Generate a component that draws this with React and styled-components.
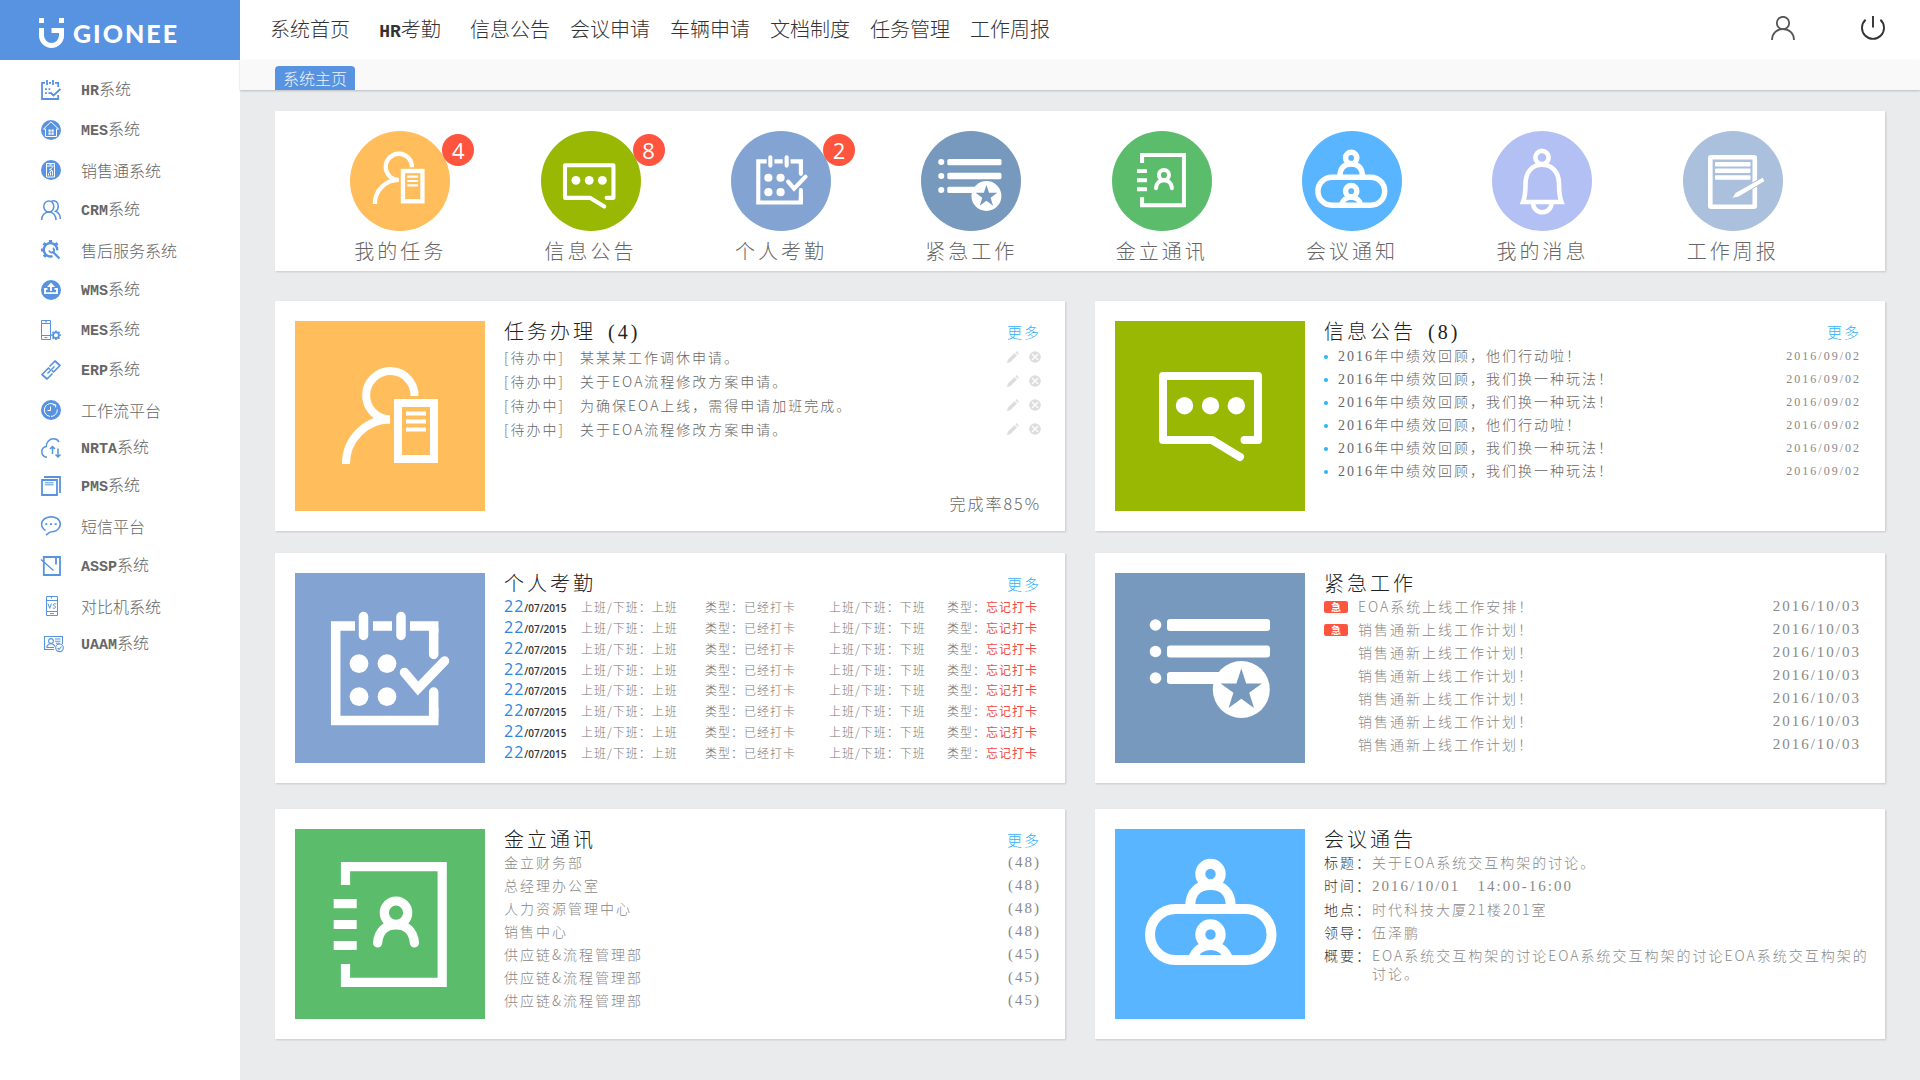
import styled, { createGlobalStyle } from "styled-components";

const GlobalStyle = createGlobalStyle`
    * {
        box-sizing: border-box;
    }

    body {
        margin: 0;
        background: #eaebed;
        font-family: "Noto Sans CJK SC", sans-serif;
        font-weight: 300;
        color: #666;
    }

    h2, ul, dl, dd {
        margin: 0;
        padding: 0;
        font-weight: inherit;
    }

    ul {
        list-style: none;
    }

    a {
        color: inherit;
        text-decoration: none;
    }

    button {
        padding: 0;
        border: 0;
        background: none;
        font: inherit;
        cursor: pointer;
    }

    svg {
        display: block;
    }
`;

const serif = `"Liberation Serif", "Noto Sans CJK SC", serif`;

const Shell = styled.div`
    display: grid;
    grid-template-columns: 240px 1fr;
    min-height: 100vh;
`;

const Sidebar = styled.aside`
    background: #fff;
`;

const Logo = styled.a`
    display: flex;
    align-items: center;
    gap: 8px;
    height: 60px;
    padding: 6px 0 0 39px;
    background: #5793e1;
    color: #fff;
`;

const LogoText = styled.span`
    font-family: Lato, sans-serif;
    font-size: 25px;
    font-weight: 900;
    line-height: 30px;
    letter-spacing: 2px;
`;

const SideList = styled.ul`
    padding-top: 10px;
`;

const SideLink = styled.a`
    display: flex;
    align-items: center;
    gap: 20px;
    height: ${(p) => (p.$compact ? "36px" : "40px")};
    padding-left: 41px;
    font-size: 16px;
    line-height: 20px;
`;

const Latin = styled.b`
    font-family: "Liberation Mono", monospace;
    font-size: ${(p) => (p.$large ? "18px" : "15px")};
    font-weight: 700;
`;

const Main = styled.main`
    display: flex;
    flex-direction: column;
    min-width: 0;
`;

const TopBar = styled.header`
    display: flex;
    justify-content: space-between;
    align-items: center;
    height: 60px;
    padding: 0 35px 0 30px;
    background: #fff;
`;

const Nav = styled.nav`
    display: flex;
    gap: 20px;
`;

const NavLink = styled.a`
    min-width: 80px;
    text-align: center;
    font-size: 20px;
    line-height: 28px;
    white-space: nowrap;
    color: #333;
`;

const Tools = styled.div`
    display: flex;
    gap: 66px;
    padding-bottom: 4px;
    color: #444;
`;

const TabBar = styled.div`
    display: flex;
    align-items: flex-end;
    height: 30px;
    padding: 0 35px;
    background: #f9f9f9;
    box-shadow: 0 1px 2px rgba(0, 0, 0, 0.2);
`;

const Tab = styled.button`
    width: 80px;
    height: 24px;
    border-radius: 4px 4px 0 0;
    background: #5793e1;
    color: #eef3fb;
    font-size: 16px;
    line-height: 24px;
`;

const Content = styled.div`
    padding: 21px 35px 41px;
`;

const Surface = styled.section`
    background: #fff;
    box-shadow: 1px 1px 2px rgba(0, 0, 0, 0.15);
`;

const QuickBar = styled(Surface)`
    display: grid;
    grid-template-columns: repeat(8, 1fr);
    min-height: 160px;
    padding: 20px 57px 4px 30px;
`;

const QuickLink = styled.a`
    display: flex;
    flex-direction: column;
    align-items: center;
    gap: 6px;
    font-size: 20px;
    line-height: 28px;
    letter-spacing: 3px;
    white-space: nowrap;
`;

const Circle = styled.span`
    position: relative;
    width: 100px;
    height: 100px;
    border-radius: 50%;
    background: ${(p) => p.$color};
    color: ${(p) => p.$color};
`;

const Badge = styled.span`
    position: absolute;
    top: 3px;
    right: -24px;
    width: 32px;
    height: 32px;
    border-radius: 50%;
    background: #ff553e;
    color: #fff;
    font-family: "Open Sans", sans-serif;
    font-size: 22px;
    font-weight: 400;
    line-height: 32px;
    letter-spacing: 0;
    text-align: center;
`;

const PanelRow = styled.div`
    display: grid;
    grid-template-columns: 1fr 1fr;
    gap: 30px;
    margin-top: ${(p) => p.$gap};
`;

const Card = styled(Surface)`
    display: flex;
    gap: 19px;
    min-width: 0;
    padding: 20px 14px 20px 20px;
`;

const Tile = styled.div`
    flex: none;
    width: 190px;
    height: 190px;
    background: ${(p) => p.$color};
    color: ${(p) => p.$color};
`;

const CardBody = styled.div`
    display: flex;
    flex-direction: column;
    flex: 1;
    min-width: 0;
`;

const CardHead = styled.div`
    display: flex;
    justify-content: space-between;
    align-items: center;
    height: 22px;
    padding-right: 10px;
`;

const Title = styled.h2`
    display: flex;
    gap: 12px;
    color: #222;
    font-family: ${serif};
    font-size: 20px;
    line-height: 22px;
    letter-spacing: 3px;
`;

const More = styled.a`
    color: #33b1f8;
    font-size: 15px;
    line-height: 22px;
    letter-spacing: 2px;
`;

const List = styled.ul`
    padding: ${(p) => p.$top || "0"} 10px 0 0;
    color: ${(p) => p.$color || "#888"};
    font-family: ${(p) => (p.$serif ? serif : "inherit")};
    font-size: 14px;
    line-height: ${(p) => p.$line || "23px"};
    letter-spacing: 2px;
`;

const Row = styled.li`
    display: flex;
    align-items: center;
    gap: 10px;
`;

const RowText = styled.a`
    flex: 1;
    white-space: pre;
`;

const Dot = styled.span`
    width: 4px;
    height: 4px;
    border-radius: 50%;
    background: #29b6f6;
`;

const Flag = styled.span`
    width: 24px;
    height: 12px;
    border-radius: 2px;
    background: ${(p) => (p.$on ? "#ff553e" : "transparent")};
    color: #fff;
    font-size: 10px;
    font-weight: 700;
    line-height: 12px;
    letter-spacing: 0;
    text-align: center;
`;

const Num = styled.span`
    font-family: ${serif};
    font-size: ${(p) => (p.$small ? "12px" : "15px")};
    letter-spacing: 2px;
    white-space: pre;
    color: #888;
`;

const IconButton = styled.button`
    color: #ddd;
`;

const Rate = styled.p`
    margin: auto 10px 0 0;
    text-align: right;
    font-size: 16px;
    line-height: 16px;
    letter-spacing: 2px;
`;

const Attendance = styled.table`
    width: calc(100% - 10px);
    height: 166px;
    margin-top: 2px;
    border-collapse: collapse;
    table-layout: fixed;
    color: #777;
    font-size: 12px;
    line-height: 16px;
    letter-spacing: 1px;
    white-space: nowrap;

    td {
        padding: 0;
    }
`;

const Col = styled.col`
    width: ${(p) => p.$width};
`;

const DateCell = styled.td`
    color: #333;
    font-family: "Open Sans", sans-serif;
    font-size: 10px;
    font-weight: 600;
    letter-spacing: 0;
`;

const Day = styled.span`
    color: #2b86e0;
    font-size: 16px;
    font-weight: 400;
    letter-spacing: 1px;
`;

const Missed = styled.span`
    color: #f04a4a;
    font-weight: 400;
`;

const Details = styled.dl`
    font-size: 14px;
    line-height: 18px;
    letter-spacing: 2px;
`;

const Detail = styled.div`
    display: flex;
    padding: 2px 0 3px;
    color: #888;

    dt {
        flex: none;
        width: 48px;
        color: #333;
    }
`;

const TaskArt = () => (
    <g fill="none" stroke="#fff" strokeWidth="8">
        <path d="M119.5 75A24.2 24.2 0 1 0 95 98.500" />
        <path d="M95 98.500A44 44 0 0 0 51 143" />
        <rect x="103" y="82" width="36" height="56" />
        <path strokeWidth="4" d="M111 92.500h20M111 100.500h20M111 108.500h20" />
    </g>
);

const ChatArt = () => (
    <g fill="#fff">
        <path
            d="M129.500 119H143V55H48V119H97L125 136"
            fill="none"
            stroke="#fff"
            strokeWidth="8"
            strokeLinecap="round"
            strokeLinejoin="round"
        />
        <circle cx="69.500" cy="84.700" r="8.700" />
        <circle cx="95.500" cy="84.700" r="8.700" />
        <circle cx="121.300" cy="84.700" r="8.700" />
    </g>
);

const CalendarArt = () => (
    <g fill="none" stroke="#fff" strokeWidth="9.500">
        <path d="M60 53H40.700V147.500H138.700V135M78 53H97M115 53H138.700V60" />
        <path strokeLinecap="round" d="M68.500 43.500V62.500M106 43.500V62.500M138.700 56V81.500M138.700 119V144M109.500 99.500L123 115.500L149.500 88" />
        <g fill="#fff" stroke="none">
            <circle cx="64" cy="90.600" r="9.400" />
            <circle cx="92" cy="90.600" r="9.400" />
            <circle cx="64" cy="123.600" r="9.400" />
            <circle cx="92" cy="123.600" r="9.400" />
        </g>
    </g>
);

const UrgentArt = () => (
    <g fill="#fff">
        <circle cx="40.500" cy="52" r="5.800" />
        <circle cx="40.500" cy="78.500" r="5.800" />
        <circle cx="40.500" cy="105" r="5.800" />
        <rect x="52" y="46" width="103" height="12" rx="3" />
        <rect x="52" y="72.500" width="103" height="12" rx="3" />
        <rect x="52" y="99" width="60" height="12" rx="3" />
        <circle cx="126.300" cy="116.500" r="28.500" />
        <path
            fill="currentColor"
            d="M126.300 95.500L131.200 110.500H147L134.200 119.800L139 135L126.300 125.700L113.600 135L118.400 119.800L105.600 110.500H121.400Z"
        />
    </g>
);

const ContactArt = () => (
    <g fill="none" stroke="#fff" strokeWidth="9.200">
        <path d="M50.500 56V37.600H147.200V153.400H50.500V135" />
        <path d="M38.700 74.700H61.700M38.700 95.500H61.700M38.700 116.500H61.700" />
        <circle cx="101" cy="83.700" r="11.700" />
        <path strokeLinecap="round" d="M82.600 114C83.500 102 91 95.800 101 95.800S118.500 102 119.400 114" />
    </g>
);

const MeetingArt = () => (
    <g fill="none" stroke="#fff" strokeWidth="10">
        <rect x="35" y="80" width="121.500" height="51" rx="25.500" />
        <circle cx="95.500" cy="45" r="10.200" />
        <path d="M75.200 77C75.200 63 84 56 95.500 56S115.800 63 115.800 77" />
        <circle cx="95.500" cy="105.500" r="10.200" />
        <path strokeWidth="9" d="M77 131C80 121 87 116.500 95.500 116.500S111 121 114 131" />
    </g>
);

const BellArt = () => (
    <g fill="none" stroke="#fff" strokeWidth="4.600">
        <circle cx="50" cy="26.500" r="6.600" />
        <path d="M31 71C33 66 33.500 60 33.500 53C33.500 41 40 33.800 50 33.800S67 41 67 53C67 60 67.500 66 69.500 71Z" />
        <path d="M41 72A9 9 0 0 0 59.500 72" />
    </g>
);

const ReportArt = () => (
    <g fill="#fff">
        <rect x="27.300" y="26.300" width="44.500" height="49.500" rx="1" fill="none" stroke="#fff" strokeWidth="4.600" />
        <rect x="32" y="31" width="35.500" height="4.500" rx="1" />
        <rect x="32" y="37.600" width="35.500" height="4.500" rx="1" />
        <rect x="32" y="44.200" width="35.500" height="4.500" rx="1" />
        <path
            d="M48.500 67.500L52.500 61.500L79.800 46.200L82 50.300L55.500 66Z"
            stroke="currentColor"
            strokeWidth="1"
        />
    </g>
);

const quickLinks = [
    { label: "我的任务", color: "#ffbe5b", art: TaskArt, box: "5 8 185 185", count: 4 },
    { label: "信息公告", color: "#99b803", art: ChatArt, box: "1 -12 196 196", count: 8 },
    { label: "个人考勤", color: "#83a4d2", art: CalendarArt, box: "-22 -17 230 230", count: 2 },
    { label: "紧急工作", color: "#7799bd", art: UrgentArt, box: "2 -7 190 190" },
    { label: "金立通讯", color: "#5bbd6c", art: ContactArt, box: "-19 -18 231 231" },
    { label: "会议通知", color: "#59b5ff", art: MeetingArt, box: "6 -4 182 182" },
    { label: "我的消息", color: "#b3c0f3", art: BellArt, box: "0 0 100 100" },
    { label: "工作周报", color: "#abc0dc", art: ReportArt, box: "0 0 100 100" },
];

const navLinks = [
    { text: "系统首页" },
    { latin: "HR", text: "考勤" },
    { text: "信息公告" },
    { text: "会议申请" },
    { text: "车辆申请" },
    { text: "文档制度" },
    { text: "任务管理" },
    { text: "工作周报" },
];

const sideLinks = [
    {
        latin: "HR",
        text: "系统",
        icon: (
            <g fill="none" stroke="currentColor" strokeWidth="1.800">
                <path d="M4 2.800H1V19H17.200V15M8 2.800h2M14 2.800h3.200V7" />
                <path d="M6 0v5M12 0v5" />
                <path d="M4 9.200h1.800M7.500 9.200h1.800M4 13.200h1.800M7.500 13.200h1.800M9.500 12.500L12.500 15.500L19.500 9" />
            </g>
        ),
    },
    {
        latin: "MES",
        text: "系统",
        icon: (
            <g fill="none" stroke="#fff" strokeWidth="1">
                <circle cx="10" cy="10" r="10" fill="currentColor" stroke="none" />
                <path d="M2.500 9L10 1.800L17.500 9H15.500V16.500H4.500V9Z" />
                <path fill="#fff" stroke="none" d="M7.500 9.500h2.200v2.200H7.500zM10.500 9.500h2.200v2.200h-2.200zM7.500 12.500h2.200v2.200H7.500zM10.500 12.500h2.200v2.200h-2.200z" />
            </g>
        ),
    },
    {
        text: "销售通系统",
        icon: (
            <g fill="none" stroke="#fff" strokeWidth="1">
                <circle cx="10" cy="10" r="10" fill="currentColor" stroke="none" />
                <path d="M5.500 3.500h8v13.500h-8zM5.500 6h8M8.500 4.700h2" />
                <path d="M11.500 7.500L8.500 9.500L11 10.500L8 12.500M7.500 15.500v-2M9.500 15.500v-3M11.500 15.500v-5" />
            </g>
        ),
    },
    {
        latin: "CRM",
        text: "系统",
        icon: (
            <g fill="none" stroke="currentColor" strokeWidth="1.500">
                <ellipse cx="7.800" cy="6.500" rx="5" ry="5.500" />
                <path d="M.7 20C.7 15.500 3.500 12 7.800 12S15 15.500 15 20M10.500 1.200C14 -.3 17.300 2.300 17.300 6C17.300 8.500 16.300 10.300 14.500 11.300C17.500 12.500 19.300 15 19.300 19" />
            </g>
        ),
    },
    {
        text: "售后服务系统",
        icon: (
            <g fill="none" stroke="currentColor">
                <circle cx="9.500" cy="9.800" r="6.700" strokeWidth="2.400" strokeDasharray="34 9" transform="rotate(72 9.500 9.800)" />
                <path strokeWidth="3.200" d="M9.500 0v3M0 10h3M2.600 3.200L5 5.400M16.500 3.200L14 5.400M3 16.800L5 14.500" />
                <path strokeWidth="2.200" d="M11.500 11.500L18.500 18.500" />
                <path strokeWidth="1.700" d="M8 10.500A3 3 0 0 0 12.500 12A3 3 0 0 0 12 8" />
            </g>
        ),
    },
    {
        latin: "WMS",
        text: "系统",
        icon: (
            <g fill="none" stroke="#fff" strokeWidth="1.800">
                <circle cx="10" cy="10" r="10" fill="currentColor" stroke="none" />
                <path d="M6.500 8.900H4V13.200H16V8.900H13.500M10 11V6" />
                <path fill="#fff" stroke="none" d="M10 2.500L14 7H6z" />
            </g>
        ),
    },
    {
        latin: "MES",
        text: "系统",
        icon: (
            <g fill="none" stroke="currentColor" strokeWidth="1">
                <path d="M.5 .5h9v19h-9zM.5 3.500h9M.5 15.500h9M4 1.800h2M3.500 17.600h3" />
                <circle cx="15" cy="15.200" r="2.900" strokeWidth="1.800" />
                <path strokeWidth="1.800" d="M15 10.400v1.500M15 18.500v1.500M10.200 15.200h1.500M18.300 15.200h1.500M11.600 11.800l1 1M17.400 17.600l1 1M18.400 11.800l-1 1M12.600 17.600l-1 1" />
            </g>
        ),
    },
    {
        latin: "ERP",
        text: "系统",
        icon: (
            <g fill="none" stroke="currentColor" strokeWidth="1.700" strokeLinejoin="round">
                <path d="M8.500 6.500L14 1L19 5.500L12.500 12L11 10.500" />
                <path d="M11.500 13.500L6 19L1 14.500L7.500 8L9 9.500" />
                <path strokeWidth="1.400" d="M6.500 13.500L13.500 6.500" />
            </g>
        ),
    },
    {
        text: "工作流平台",
        icon: (
            <g fill="none" stroke="#fff" strokeWidth="1">
                <circle cx="10" cy="10" r="10" fill="currentColor" stroke="none" />
                <path d="M14 5A6.500 6.500 0 1 0 16.300 9.500M11.500 4.800H14.700V7.500M9.500 6.500V10.500H6.500" />
                <path stroke="currentColor" d="M9.500 15v3M14 14.500l1.500 1.500" />
            </g>
        ),
    },
    {
        latin: "NRTA",
        text: "系统",
        compact: true,
        icon: (
            <g fill="none" stroke="currentColor" strokeWidth="1.500">
                <path d="M6 19.300C2.500 19.300 .8 16.500 .8 13.800C.8 11 2.500 9 5.300 8.500C5.300 4 8.500 .8 12.500 .8C15 .8 17 2 18 3.800" />
                <path d="M11.500 16V9M9 11L11.500 8.500L14 11M17 10.500V19M14.500 16.500L17 19L19.500 16.500" />
            </g>
        ),
    },
    {
        latin: "PMS",
        text: "系统",
        icon: (
            <g fill="none" stroke="currentColor" strokeWidth="1.800">
                <path d="M3 1H19V17" />
                <path d="M1 4H16V19H1Z" />
                <path strokeWidth="1" d="M4 6.800h8.500M4 8.800h8.500" />
            </g>
        ),
    },
    {
        text: "短信平台",
        icon: (
            <g fill="none" stroke="currentColor" strokeWidth="1.600">
                <path d="M4.500 14.500C-1 11 -.3 5 4.500 2.300C9 -.3 16 .8 18.400 4.800C21 10 17 15.500 10.500 15.800C8.500 15.800 7.500 17.500 5 19" />
                <path strokeWidth="1.800" d="M4.300 8.200h2M9 8.200h2M13.700 8.200h2" />
            </g>
        ),
    },
    {
        latin: "ASSP",
        text: "系统",
        icon: (
            <g fill="none" stroke="currentColor" strokeWidth="1.800">
                <path d="M2.800 1H19V19H2.800ZM15 1v7.500" />
                <path strokeWidth="1.300" d="M0 3.500L12.500 14.500" />
            </g>
        ),
    },
    {
        text: "对比机系统",
        icon: (
            <g fill="none" stroke="currentColor" strokeWidth="1">
                <path d="M5.500 .5h11v19h-11zM5.500 4.500h11M5.500 15.500h11M10.500 1v1.500M9 17.600h4" />
                <path d="M7 7.500L8.700 12.300L10.400 7.500M14.900 8C12.500 6.800 11.300 9.200 13.300 9.900C15.800 10.800 14.300 13 11.900 12" />
            </g>
        ),
    },
    {
        latin: "UAAM",
        text: "系统",
        compact: true,
        icon: (
            <g fill="none" stroke="currentColor" strokeWidth="1.100">
                <path d="M13 15.500H3.500V2.500H21.500V10M14 5h5.500M14 7.200h5.500M15 9.300h4" />
                <circle cx="10" cy="7" r="2.400" />
                <path d="M5.500 13.500C6.500 10.500 8 9.700 10 9.700S13 10.500 14 12.500M5.500 13.500H13" />
                <circle cx="18.500" cy="13.800" r="3.800" />
                <path d="M16.500 14L18 15.500L20.500 12.500" />
            </g>
        ),
    },
];

const tasks = [
    "某某某工作调休申请。",
    "关于EOA流程修改方案申请。",
    "为确保EOA上线，需得申请加班完成。",
    "关于EOA流程修改方案申请。",
];

const notices = [
    "2016年中绩效回顾，他们行动啦！",
    "2016年中绩效回顾，我们换一种玩法！",
    "2016年中绩效回顾，我们换一种玩法！",
    "2016年中绩效回顾，他们行动啦！",
    "2016年中绩效回顾，我们换一种玩法！",
    "2016年中绩效回顾，我们换一种玩法！",
];

const urgents = [
    { text: "EOA系统上线工作安排！", flag: true },
    { text: "销售通新上线工作计划！", flag: true },
    { text: "销售通新上线工作计划！" },
    { text: "销售通新上线工作计划！" },
    { text: "销售通新上线工作计划！" },
    { text: "销售通新上线工作计划！" },
    { text: "销售通新上线工作计划！" },
];

const departments = [
    ["金立财务部", 48],
    ["总经理办公室", 48],
    ["人力资源管理中心", 48],
    ["销售中心", 48],
    ["供应链&流程管理部", 45],
    ["供应链&流程管理部", 45],
    ["供应链&流程管理部", 45],
];

const Panel = ({ title, count, more, color, art: Art, children }) => {
    return (
        <Card>
            <Tile $color={color}>
                <svg width="190" height="190" viewBox="0 0 190 190" aria-hidden="true">
                    <Art />
                </svg>
            </Tile>
            <CardBody>
                <CardHead>
                    <Title>
                        {title}
                        {count && <span>({count})</span>}
                    </Title>
                    {more && <More href="#more">更多</More>}
                </CardHead>
                {children}
            </CardBody>
        </Card>
    );
};

const Menu = () => {
    return (
        <Sidebar>
            <Logo href="#home">
                <svg width="26" height="30" viewBox="0 0 26 30" fill="#fff" aria-hidden="true">
                    <path d="M0 0h5v5H0zM20 0h5v5h-5z" />
                    <path d="M2.500 10V17.500A10 10 0 0 0 22.500 17.500V12.500H12.500" fill="none" stroke="#fff" strokeWidth="5" />
                </svg>
                <LogoText>GIONEE</LogoText>
            </Logo>
            <SideList>
                {sideLinks.map((item, i) => (
                    <li key={i}>
                        <SideLink href="#system" $compact={item.compact}>
                            <svg width="20" height="20" viewBox="0 0 20 20" overflow="visible" color="#5793e1" aria-hidden="true">
                                {item.icon}
                            </svg>
                            <span>
                                {item.latin && <Latin>{item.latin}</Latin>}
                                {item.text}
                            </span>
                        </SideLink>
                    </li>
                ))}
            </SideList>
        </Sidebar>
    );
};

const Header = () => {
    return (
        <TopBar>
            <Nav>
                {navLinks.map((item) => (
                    <NavLink key={item.text} href="#nav">
                        {item.latin && <Latin $large>{item.latin}</Latin>}
                        {item.text}
                    </NavLink>
                ))}
            </Nav>
            <Tools>
                <button aria-label="用户">
                    <svg width="24" height="24" viewBox="0 0 24 24" fill="none" stroke="#555" strokeWidth="1.800">
                        <circle cx="12" cy="7" r="6.200" />
                        <path d="M1 24C1 17.500 5.500 13.200 12 13.200S23 17.500 23 24" />
                    </svg>
                </button>
                <button aria-label="退出">
                    <svg width="24" height="24" viewBox="0 0 24 24" fill="none" stroke="#333" strokeWidth="1.900">
                        <path d="M4.600 3.700A11 11 0 1 0 19.400 3.700M12 0V11.500" />
                    </svg>
                </button>
            </Tools>
        </TopBar>
    );
};

const QuickLinks = () => {
    return (
        <QuickBar>
            {quickLinks.map(({ label, color, art: Art, box, count }) => (
                <QuickLink key={label} href="#quick">
                    <Circle $color={color}>
                        <svg width="100" height="100" viewBox={box} aria-hidden="true">
                            <Art />
                        </svg>
                        {count && <Badge>{count}</Badge>}
                    </Circle>
                    {label}
                </QuickLink>
            ))}
        </QuickBar>
    );
};

const TaskPanel = () => {
    return (
        <Panel title="任务办理" count={4} more color="#ffbe5b" art={TaskArt}>
            <List $top="2px" $line="24px" $color="#666">
                {tasks.map((text, i) => (
                    <Row key={i}>
                        <RowText href="#task">{`[待办中]   ${text}`}</RowText>
                        <IconButton aria-label="编辑">
                            <svg width="12" height="12" viewBox="0 0 12 12" fill="currentColor">
                                <path d="M0 12L.8 8.700L7.500 2L10 4.500L3.300 11.200ZM8.300 1.200L9.500 0L12 2.500L10.800 3.700Z" />
                            </svg>
                        </IconButton>
                        <IconButton aria-label="删除">
                            <svg width="12" height="12" viewBox="0 0 12 12">
                                <circle cx="6" cy="6" r="5.800" fill="currentColor" />
                                <path d="M3 3L9 9M9 3L3 9" stroke="#fff" strokeWidth="1.300" />
                            </svg>
                        </IconButton>
                    </Row>
                ))}
            </List>
            <Rate>完成率85%</Rate>
        </Panel>
    );
};

const NoticePanel = () => {
    return (
        <Panel title="信息公告" count={8} more color="#99b803" art={ChatArt}>
            <List $top="2px" $color="#666" $serif>
                {notices.map((text, i) => (
                    <Row key={i}>
                        <Dot />
                        <RowText href="#notice">{text}</RowText>
                        <Num $small>2016/09/02</Num>
                    </Row>
                ))}
            </List>
        </Panel>
    );
};

const AttendancePanel = () => {
    return (
        <Panel title="个人考勤" more color="#83a4d2" art={CalendarArt}>
            <Attendance>
                <colgroup>
                    <Col $width="77px" />
                    <Col $width="124px" />
                    <Col $width="124px" />
                    <Col $width="118px" />
                    <Col />
                </colgroup>
                <tbody>
                    {Array.from({ length: 8 }, (_, i) => (
                        <tr key={i}>
                            <DateCell>
                                <Day>22</Day>/07/2015
                            </DateCell>
                            <td>上班/下班：上班</td>
                            <td>类型：已经打卡</td>
                            <td>上班/下班：下班</td>
                            <td>
                                类型：<Missed>忘记打卡</Missed>
                            </td>
                        </tr>
                    ))}
                </tbody>
            </Attendance>
        </Panel>
    );
};

const UrgentPanel = () => {
    return (
        <Panel title="紧急工作" color="#7799bd" art={UrgentArt}>
            <List>
                {urgents.map((item, i) => (
                    <Row key={i}>
                        <Flag $on={item.flag}>{item.flag && "急"}</Flag>
                        <RowText href="#urgent">{item.text}</RowText>
                        <Num>2016/10/03</Num>
                    </Row>
                ))}
            </List>
        </Panel>
    );
};

const ContactPanel = () => {
    return (
        <Panel title="金立通讯" more color="#5bbd6c" art={ContactArt}>
            <List>
                {departments.map(([name, total], i) => (
                    <Row key={i}>
                        <RowText href="#department">{name}</RowText>
                        <Num>({total})</Num>
                    </Row>
                ))}
            </List>
        </Panel>
    );
};

const MeetingPanel = () => {
    return (
        <Panel title="会议通告" color="#59b5ff" art={MeetingArt}>
            <Details>
                <Detail>
                    <dt>标题：</dt>
                    <dd>关于EOA系统交互构架的讨论。</dd>
                </Detail>
                <Detail>
                    <dt>时间：</dt>
                    <dd>
                        <Num>{"2016/10/01   14:00-16:00"}</Num>
                    </dd>
                </Detail>
                <Detail>
                    <dt>地点：</dt>
                    <dd>时代科技大厦21楼201室</dd>
                </Detail>
                <Detail>
                    <dt>领导：</dt>
                    <dd>伍泽鹏</dd>
                </Detail>
                <Detail>
                    <dt>概要：</dt>
                    <dd>EOA系统交互构架的讨论EOA系统交互构架的讨论EOA系统交互构架的讨论。</dd>
                </Detail>
            </Details>
        </Panel>
    );
};

export default function App() {
    return (
        <>
            <GlobalStyle />
            <Shell>
                <Menu />
                <Main>
                    <Header />
                    <TabBar>
                        <Tab>系统主页</Tab>
                    </TabBar>
                    <Content>
                        <QuickLinks />
                        <PanelRow $gap="30px">
                            <TaskPanel />
                            <NoticePanel />
                        </PanelRow>
                        <PanelRow $gap="22px">
                            <AttendancePanel />
                            <UrgentPanel />
                        </PanelRow>
                        <PanelRow $gap="26px">
                            <ContactPanel />
                            <MeetingPanel />
                        </PanelRow>
                    </Content>
                </Main>
            </Shell>
        </>
    );
}
